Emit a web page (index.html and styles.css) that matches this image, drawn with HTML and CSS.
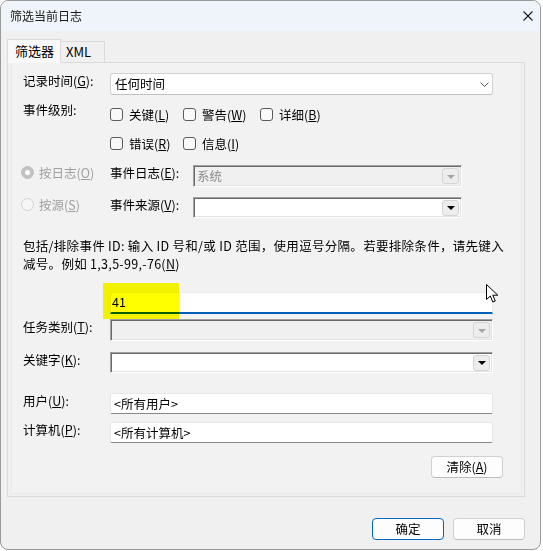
FILE: index.html
```html
<!DOCTYPE html>
<html>
<head>
<meta http-equiv="Content-Type" content="text/html; charset=UTF-8">
<title>筛选当前日志</title>
<link rel="stylesheet" href="styles.css">
</head>
<body>
<div class="window">
<div class="titlebar">
<span class="title">筛选当前日志</span>
<svg class="close" width="10" height="10" viewBox="0 0 10 10"><path d="M0.5 0.5L9.5 9.5M9.5 0.5L0.5 9.5" stroke="#1a1a1a" stroke-width="1.1" fill="none"/></svg>
</div>
<div class="tabs">
<div class="tab active">筛选器</div>
<div class="tab">XML</div>
</div>
<div class="panel">
<div class="page">
<div class="row r-time">
<div class="lbl">记录时间(<u>G</u>):</div>
<div class="select">
<span>任何时间</span>
<svg width="9" height="5" viewBox="0 0 9 5"><path d="M0.5 0.5L4.5 4.5L8.5 0.5" stroke="#5a5a5a" stroke-width="1" fill="none"/></svg>
</div>
</div>
<div class="row r-level">
<div class="lbl">事件级别:</div>
<div class="checks">
<div class="check"><span class="box"></span>关键(<u>L</u>)</div>
<div class="check"><span class="box"></span>警告(<u>W</u>)</div>
<div class="check"><span class="box"></span>详细(<u>B</u>)</div>
<div class="check"><span class="box"></span>错误(<u>R</u>)</div>
<div class="check"><span class="box"></span>信息(<u>I</u>)</div>
</div>
</div>
<div class="row r-log">
<div class="radio disabled"><span class="dot on"></span>按日志(<u>O</u>)</div>
<div class="lbl2">事件日志(<u>E</u>):</div>
<div class="combo short off">
<span class="val">系统</span>
<span class="drop"><i></i></span>
</div>
</div>
<div class="row r-src">
<div class="radio disabled"><span class="dot"></span>按源(<u>S</u>)</div>
<div class="lbl2">事件来源(<u>V</u>):</div>
<div class="combo short h21">
<span class="val"></span>
<span class="drop"><i></i></span>
</div>
</div>
<div class="desc">
<div class="line">包括/排除事件 ID: 输入 ID 号和/或 ID 范围，使用逗号分隔。若要排除条件，请先键入</div>
<div class="line">减号。例如 1,3,5-99,-76(<u>N</u>)</div>
</div>
<div class="row r-ids">
<div class="idbox">41</div>
</div>
<div class="row r-task">
<div class="lbl">任务类别(<u>T</u>):</div>
<div class="combo off">
<span class="val"></span>
<span class="drop"><i></i></span>
</div>
</div>
<div class="row r-key">
<div class="lbl">关键字(<u>K</u>):</div>
<div class="combo h21">
<span class="val"></span>
<span class="drop"><i></i></span>
</div>
</div>
<div class="row r-user">
<div class="lbl">用户(<u>U</u>):</div>
<div class="text">&lt;所有用户&gt;</div>
</div>
<div class="row r-comp">
<div class="lbl">计算机(<u>P</u>):</div>
<div class="text">&lt;所有计算机&gt;</div>
</div>
<div class="row r-clear">
<button class="btn">清除(<u>A</u>)</button>
</div>
</div>
</div>
<div class="footer">
<button class="btn default">确定</button>
<button class="btn">取消</button>
</div>
<div class="marker"></div>
<svg class="pointer" width="13" height="20" viewBox="0 0 13 20"><path d="M0.5 0.5L0.5 15.5L4.3 12L6.8 18L9.3 17L6.8 11.2L11.8 11.2Z" fill="#fff" stroke="#000" stroke-width="1" stroke-linejoin="round"/></svg>
</div>
</body>
</html>
```
FILE: styles.css
```css
html {
	background: #fff;
}
body {
	margin: 0;
	font-family: "Noto Sans CJK SC", sans-serif;
	font-size: 12.5px;
	color: #000;
}
u {
	text-decoration: underline;
	text-underline-offset: 1px;
}
.window {
	position: relative;
	width: 541px;
	height: 550px;
	box-sizing: border-box;
	border: 1px solid #9a9a9a;
	border-radius: 8px;
	overflow: hidden;
	background: #f0f0f0;
}
.titlebar {
	height: 30px;
	background: #eef4f9;
	display: flex;
	align-items: center;
	justify-content: space-between;
	padding: 0 7px 0 9px;
}
.title {
	font-size: 12px;
	line-height: 16px;
	color: #1a1a1a;
}
.tabs {
	display: flex;
	align-items: flex-end;
	margin: 8px 0 -1px 6px;
	height: 24px;
	position: relative;
	z-index: 1;
}
.tab {
	box-sizing: border-box;
	height: 22px;
	width: 44px;
	border: 1px solid #dadada;
	border-left: none;
	border-bottom: 1px solid #dadada;
	line-height: 19px;
	padding-left: 5px;
	font-size: 13px;
	background: #f0f0f0;
}
.tab.active {
	width: 54px;
	height: 24px;
	border-left: 1px solid #dadada;
	border-bottom: 1px solid #f9f9f9;
	background: #f9f9f9;
	padding-left: 7px;
	line-height: 21px;
}
.panel {
	margin-left: 6px;
	width: 518px;
	height: 435px;
	box-sizing: border-box;
	border: 1px solid #dadada;
	padding: 0 2px 2px 3px;
	display: flex;
	flex-direction: column;
}
.page {
	flex: 1;
	border: 1px solid #e9e9e9;
	border-top: none;
	background: #f2f2f2;
	padding: 0 0 0 11px;
}
.row {
	display: flex;
	align-items: flex-start;
	width: 470px;
}
.lbl {
	width: 87px;
	line-height: 16px;
	white-space: nowrap;
}
.lbl2 {
	width: 83px;
	line-height: 16px;
	white-space: nowrap;
}
.r-time {
	margin-top: 10px;
}
.r-level {
	margin-top: 7px;
}
.r-log {
	margin-top: 13px;
}
.r-src {
	margin-top: 10px;
}
.r-ids {
	margin-top: 19px;
	padding-left: 87px;
	box-sizing: border-box;
}
.r-task {
	margin-top: 5px;
}
.r-key {
	margin-top: 11px;
}
.r-user {
	margin-top: 20px;
}
.r-comp {
	margin-top: 8px;
}
.r-clear {
	margin-top: 13px;
	justify-content: flex-end;
}
.r-clear .btn {
	margin-right: -10px;
}
.select {
	flex: 1;
	height: 22px;
	box-sizing: border-box;
	background: #fff;
	border: 1px solid #d2d2d2;
	border-bottom-color: #c0c0c0;
	border-radius: 3px;
	display: flex;
	align-items: center;
	justify-content: space-between;
	padding: 0 3px 0 4px;
}
.select span {
	line-height: 16px;
}
.checks {
	display: grid;
	grid-template-columns: 73px 77px auto;
	row-gap: 12px;
	padding-top: 4px;
}
.check {
	display: flex;
	align-items: center;
	height: 17px;
	white-space: nowrap;
}
.box {
	width: 13px;
	height: 13px;
	box-sizing: border-box;
	border: 1px solid #5c5c5c;
	border-radius: 3px;
	background: #f9f9f9;
	margin-right: 6px;
}
.radio {
	width: 89px;
	margin-left: -2px;
	display: flex;
	align-items: center;
	height: 13px;
	margin-top: 1px;
	line-height: 16px;
	white-space: nowrap;
}
.radio.disabled {
	color: #a0a0a0;
}
.dot {
	width: 13px;
	height: 13px;
	box-sizing: border-box;
	border-radius: 50%;
	border: 1px solid #d2d2d2;
	background: #f6f6f6;
	margin-right: 5px;
	display: flex;
	align-items: center;
	justify-content: center;
}
.dot.on {
	border-color: #c0c0c0;
	background: #c2c2c2;
}
.dot.on::after {
	content: "";
	width: 5px;
	height: 5px;
	border-radius: 50%;
	background: #fff;
}
.combo {
	flex: 1;
	height: 22px;
	box-sizing: border-box;
	background: #fff;
	border-top: 1px solid #a0a0a0;
	border-left: 1px solid #a0a0a0;
	border-right: 1px solid #fff;
	border-bottom: 1px solid #fff;
	box-shadow: inset 1px 1px 0 #6a6a6a, inset -1px -1px 0 #e3e3e3;
	display: flex;
	align-items: center;
	justify-content: space-between;
	padding: 0 2px 0 2px;
}
.combo.short {
	flex: none;
	width: 269px;
}
.combo.h21 {
	height: 21px;
}
.combo.off {
	background: #f0f0f0;
}
.combo .val {
	line-height: 16px;
	padding-left: 1px;
	color: #000;
}
.combo.off .val {
	color: #8a8a8a;
}
.drop {
	width: 17px;
	height: 16px;
	box-sizing: border-box;
	border: 1px solid #d4d4d4;
	border-radius: 3px;
	background: #ededed;
	display: flex;
	align-items: center;
	justify-content: center;
}
.drop i {
	width: 0;
	height: 0;
	border-left: 4px solid transparent;
	border-right: 4px solid transparent;
	border-top: 4px solid #000;
	margin-top: 1px;
}
.combo.off .drop i {
	border-top-color: #a6a6a6;
}
.desc {
	margin-top: 19px;
	white-space: nowrap;
	letter-spacing: 0.3px;
}
.desc .line {
	height: 18px;
	line-height: 18px;
}
.idbox {
	flex: 1;
	height: 22px;
	box-sizing: border-box;
	background: #fff;
	border: 1px solid #ececec;
	border-bottom: 2px solid #005fb8;
	border-radius: 3px 3px 0 0;
	padding-left: 1px;
	line-height: 18px;
}
.text {
	flex: 1;
	height: 21px;
	box-sizing: border-box;
	background: #fff;
	border: 1px solid #e6e6e6;
	border-bottom: 1px solid #878787;
	border-radius: 2px;
	padding-left: 3px;
	line-height: 19px;
}
.btn {
	width: 72px;
	height: 22px;
	box-sizing: border-box;
	border: 1px solid #d0d0d0;
	border-bottom-color: #bcbcbc;
	border-radius: 4px;
	background: #fdfdfd;
	font-family: inherit;
	font-size: 12.5px;
	color: #000;
	padding: 0;
	line-height: 18px;
}
.btn.default {
	border: 1px solid #0067c0;
}
.footer {
	display: flex;
	justify-content: flex-end;
	gap: 9px;
	padding: 21px 15px 0 0;
}
.marker {
	position: absolute;
	left: 102px;
	top: 282px;
	width: 76px;
	height: 36px;
	background: #ffff00;
	mix-blend-mode: multiply;
}
.pointer {
	position: absolute;
	left: 485px;
	top: 283px;
}
```
